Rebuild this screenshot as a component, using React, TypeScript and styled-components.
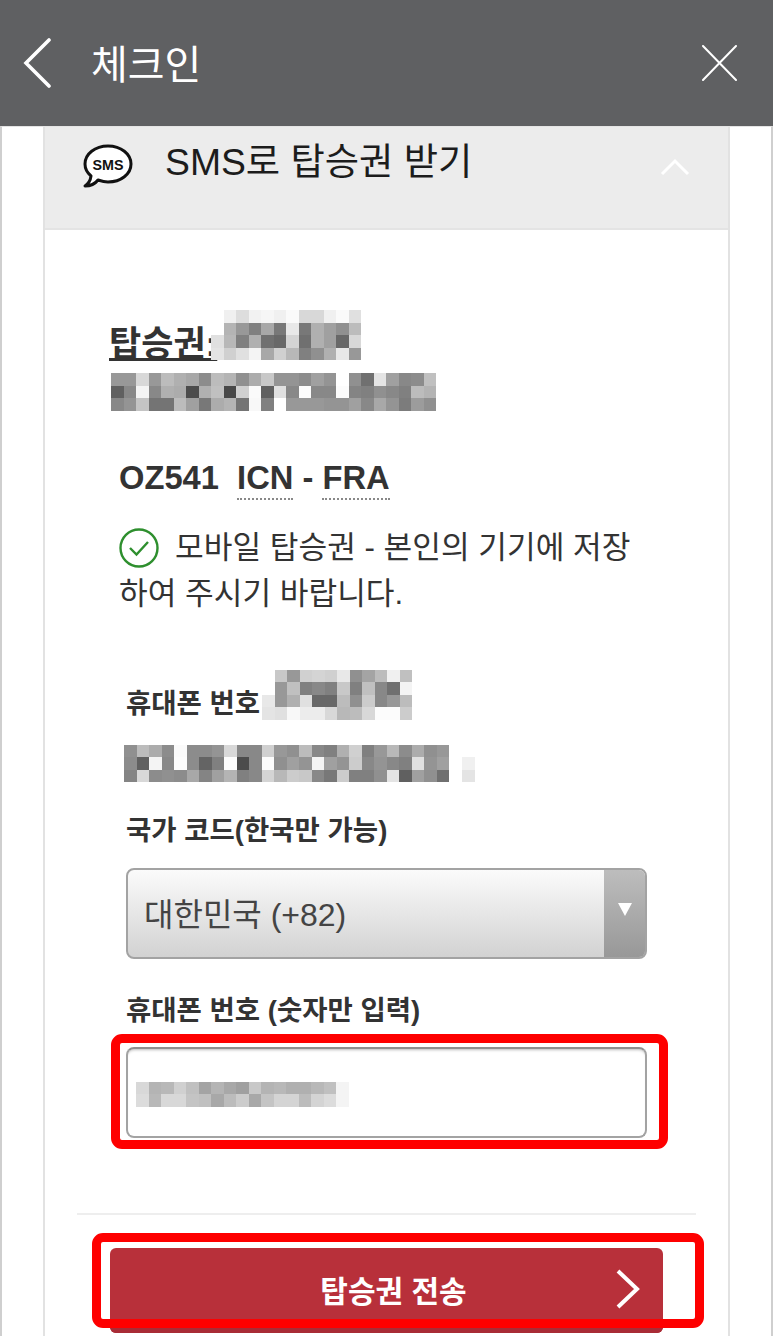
import styled, { createGlobalStyle } from "styled-components";

const KR = `"Liberation Sans", "Noto Sans CJK KR", sans-serif`;

const GlobalStyle = createGlobalStyle`
  html, body {
    margin: 0;
    padding: 0;
    background: #fff;
    font-family: ${KR};
  }
`;

const Screen = styled.div`
  width: 773px;
  height: 1336px;
  overflow: hidden;
  display: flex;
  flex-direction: column;
`;

const TopBar = styled.header`
  flex: none;
  height: 126px;
  background: #5f6062;
  display: flex;
  align-items: center;
  padding: 0 36px 0 23px;
  box-sizing: border-box;
  color: #fff;
`;

const TopTitle = styled.h1`
  flex: 1;
  margin: 4px 0 0 40px;
  font-size: 40px;
  font-weight: 400;
  line-height: 1;
`;

const Page = styled.main`
  flex: 1;
  border-left: 2px solid #cfcfcf;
  border-right: 2px solid #cfcfcf;
  padding: 0 41px;
  border-top: 1px solid #e4e4e4;
`;

const Panel = styled.section`
  border-left: 2px solid #e2e2e2;
  border-right: 2px solid #e2e2e2;
  height: 100%;
`;

const PanelHead = styled.div`
  height: 103px;
  background: #ececec;
  border-bottom: 2px solid #e4e4e4;
  display: flex;
  align-items: flex-start;
  padding: 9px 38px 0 37px;
  box-sizing: border-box;
`;

const PanelTitle = styled.h2`
  flex: 1;
  margin: 2px 0 0 31px;
  font-size: 37.3px;
  font-weight: 400;
  line-height: 48px;
  color: #1c1c1c;
`;

const PanelBody = styled.div`
  padding: 80px 32px 0;
`;

const TicketRow = styled.div`
  display: flex;
  align-items: flex-end;
  margin-left: 34px;
`;

const TicketLabel = styled.span`
  font-size: 35px;
  font-weight: 700;
  line-height: 44px;
  color: #333;
  text-decoration: underline;
  text-underline-offset: 2px;
  white-space: nowrap;
  width: 100px;
  margin: 0 0 -6px -2px;
  padding-right: 2px;
`;

const Tile = styled.div<{ $cols: number; $cell: number }>`
  display: grid;
  grid-template-columns: repeat(${(p) => p.$cols}, ${(p) => p.$cell}px);
  grid-auto-rows: ${(p) => p.$cell}px;
  flex: none;
  filter: blur(0.4px);
`;

const TicketMosaicBelow = styled.div`
  margin: 13px 0 0 34px;
`;

const Flight = styled.div`
  margin: 43px 0 0 42px;
  font-size: 32.7px;
  font-weight: 700;
  line-height: 48px;
  color: #333;
`;

const Airport = styled.abbr`
  text-decoration: none;
  border-bottom: 2px dotted #888;
  padding-bottom: 2px;
`;

const Notice = styled.p`
  margin: 23px 0 0 42px;
  width: 525px;
  font-size: 31.2px;
  line-height: 46px;
  color: #333;
`;

const CheckIcon = styled.svg`
  width: 40px;
  height: 40px;
  vertical-align: -10px;
  margin-right: 16px;
`;

const Form = styled.div`
  padding: 0 49px;
  margin-top: 53px;
`;

const PhoneRow = styled.div`
  display: flex;
  align-items: flex-end;
`;

const FieldLabel = styled.label`
  display: block;
  font-size: 27.5px;
  font-weight: 700;
  line-height: 40px;
  color: #333;
  white-space: nowrap;
`;

const PhoneLabel = styled(FieldLabel)`
  width: 136px;
  margin-bottom: -4px;
`;

const PhoneMosaic = styled.div`
  display: flex;
  align-items: flex-end;
  margin-top: 25px;
  margin-left: -2px;
  gap: 13px;
`;

const CodeLabel = styled(FieldLabel)`
  margin-top: 29px;
`;

const SelectBox = styled.div`
  margin-top: 17px;
  height: 91px;
  box-sizing: border-box;
  border: 2px solid #a3a3a3;
  border-radius: 8px;
  background: linear-gradient(#fbfbfb, #d2d2d2);
  display: flex;
  align-items: center;
  overflow: hidden;
  font-size: 32px;
  color: #444;
`;

const SelectValue = styled.span`
  flex: 1;
  padding: 0 0 3px 16px;
`;

const SelectArrow = styled.span`
  width: 41px;
  align-self: stretch;
  background: linear-gradient(#bdbdbd, #989898);
  display: flex;
  align-items: flex-start;
  justify-content: center;
  padding-top: 33px;
  box-sizing: border-box;
`;

const ArrowGlyph = styled.span`
  width: 0;
  height: 0;
  border-left: 7px solid transparent;
  border-right: 7px solid transparent;
  border-top: 13px solid #fff;
`;

const InputLabel = styled(FieldLabel)`
  margin-top: 32px;
`;

const Marked = styled.div`
  position: relative;
`;

const RedMark = styled.span<{ $top: number; $right: number; $bottom: number; $left: number }>`
  position: absolute;
  top: ${(p) => p.$top}px;
  right: ${(p) => p.$right}px;
  bottom: ${(p) => p.$bottom}px;
  left: ${(p) => p.$left}px;
  border: 9px solid #fe0000;
  border-radius: 11px;
  pointer-events: none;
`;

const InputBox = styled.div`
  margin-top: 16px;
  height: 91px;
  box-sizing: border-box;
  border: 2px solid #a3a3a3;
  border-top-color: #8f8f8f;
  border-radius: 8px;
  background: #fff;
  box-shadow: inset 0 3px 3px -2px #bbb;
  display: flex;
  align-items: center;
  padding: 3px 0 0 8px;
`;

const Divider = styled.hr`
  margin: 75px 0 0;
  border: none;
  border-top: 2px solid #eeeeee;
`;

const ButtonSlot = styled.div`
  margin: 33px 65px 0 65px;
`;

const SendButton = styled.button`
  width: 100%;
  height: 85px;
  border: none;
  border-radius: 6px;
  background: #b8303a;
  box-shadow: inset 0 -6px 0 #a82c36;
  color: #fff;
  font-family: ${KR};
  font-size: 30px;
  font-weight: 700;
  display: flex;
  align-items: center;
  justify-content: center;
  position: relative;
  padding: 0 0 4px 14px;
`;

const ButtonChevron = styled.svg`
  position: absolute;
  right: 22px;
  top: 21px;
  width: 26px;
  height: 40px;
`;

const ticketA = [
  "ff f0 dd f2 f6 f0 fa d8 d8 f0 fa e0",
  "ff b4 98 80 a8 78 e8 78 b0 a0 90 bc",
  "e0 b8 80 b0 70 68 d4 70 b0 a0 68 d8",
  "e4 d0 e0 f4 a8 d0 b8 80 90 b0 e8 98",
];
const ticketB = [
  "98 98 d8 98 bc b0 a8 8c bc b4 90 ac c8 94 94 8c a0 94 ff 90 70 e4 a0 88 8c c0",
  "60 88 f4 88 b0 ac 4c b0 c0 48 d0 fa 60 e0 88 fc 88 88 fc 84 80 90 88 80 bc b4",
  "88 94 c4 74 74 bc a0 78 ac b4 74 f8 80 ff 98 98 98 94 94 a0 88 a8 94 7c 9c 90",
];
const phoneA = [
  "ff c8 98 d0 d4 d0 e8 90 a4 bc f0 c0",
  "ff 98 c0 80 88 80 c8 80 c0 88 70 f4",
  "e8 98 b0 e0 68 68 bc 90 cc 88 98 bc",
  "e4 e0 f8 ec ec d8 b8 bc d8 fc fc cc",
];
const phoneB = [
  "90 bc ac 8c fa 8c 8c 94 d8 88 88 d0 98 90 bc 88 80 b0 d0 80 98 b8 8c ac 90 98",
  "8c 60 f4 88 fc 8c 64 80 fc 4c 88 fc 90 a0 94 f4 a0 94 cc 88 94 88 80 e0 94 a0",
  "84 d8 8c 90 8c a8 84 a0 b4 80 88 d4 b8 cc c8 88 78 cc 80 80 90 e4 60 a0 90 70",
];
const phoneDot = ["ff", "f0", "e4"];
const typed = [
  "d8 b4 b8 d0 c0 a4 b4 a8 a0 c8 b4 b8 b0 b0 b8 c0 f4",
  "dc b8 d8 d8 c4 c0 a8 bc cc a8 c4 d4 d4 bc d4 dc f4",
];

// pixelated redaction blocks, one grey value per cell
function Mosaic({ rows, cell = 12.5 }: { rows: string[]; cell?: number }) {
  const grid = rows.map((r) => r.split(" "));
  return (
    <Tile $cols={grid[0].length} $cell={cell}>
      {grid.flat().map((g, i) => (
        <span key={i} style={{ background: `#${g}${g}${g}` }} />
      ))}
    </Tile>
  );
}

export default function App() {
  return (
    <Screen>
      <GlobalStyle />
      <TopBar>
        <svg width="28" height="50" viewBox="0 0 28 50" fill="none" stroke="#fff" strokeWidth="3.6" strokeLinecap="round">
          <path d="M26 2 3 25l23 23" strokeLinejoin="miter" />
        </svg>
        <TopTitle>체크인</TopTitle>
        <svg width="35" height="36" viewBox="0 0 35 36" stroke="#fff" strokeWidth="2" strokeLinecap="round">
          <path d="M1 1l33 34M34 1 1 35" />
        </svg>
      </TopBar>
      <Page>
        <Panel>
          <PanelHead>
            <svg width="52" height="44" viewBox="0 0 52 44" style={{ marginTop: 8, flex: "none" }}>
              <path
                d="M26 2C13 2 3 10 3 20c0 5 2.500 9 6 12-.5 4-3 8-6 10 5 0 10-2 13-6 3 1 6 2 10 2 13 0 23-8 23-18S39 2 26 2Z"
                fill="#fff"
                stroke="#111"
                strokeWidth="3"
                strokeLinejoin="round"
              />
              <text
                x="26"
                y="26"
                textAnchor="middle"
                fontFamily="Liberation Sans, sans-serif"
                fontSize="15"
                fontWeight="700"
                textLength="31"
                lengthAdjust="spacingAndGlyphs"
                fill="#111"
              >
                SMS
              </text>
            </svg>
            <PanelTitle>SMS로 탑승권 받기</PanelTitle>
            <svg width="30" height="18" viewBox="0 0 30 18" fill="none" stroke="#fff" strokeWidth="3" style={{ marginTop: 22 }}>
              <path d="M2 16 15 3l13 13" />
            </svg>
          </PanelHead>
          <PanelBody>
            <TicketRow>
              <TicketLabel>탑승권:</TicketLabel>
              <Mosaic rows={ticketA} />
            </TicketRow>
            <TicketMosaicBelow>
              <Mosaic rows={ticketB} />
            </TicketMosaicBelow>
            <Flight>
              OZ541&nbsp; <Airport>ICN</Airport> - <Airport>FRA</Airport>
            </Flight>
            <Notice>
              <CheckIcon viewBox="0 0 40 40" fill="none">
                <circle cx="20" cy="20" r="18.500" stroke="#2e8f2e" strokeWidth="2.400" />
                <path d="M11 20l6.500 6.500L29 14" stroke="#2e8f2e" strokeWidth="2.400" />
              </CheckIcon>
              모바일 탑승권 - 본인의 기기에 저장하여 주시기 바랍니다.
            </Notice>
            <Form>
              <PhoneRow>
                <PhoneLabel>휴대폰 번호:</PhoneLabel>
                <Mosaic rows={phoneA} />
              </PhoneRow>
              <PhoneMosaic>
                <Mosaic rows={phoneB} />
                <Mosaic rows={phoneDot} />
              </PhoneMosaic>
              <CodeLabel>국가 코드(한국만 가능)</CodeLabel>
              <SelectBox>
                <SelectValue>대한민국 (+82)</SelectValue>
                <SelectArrow>
                  <ArrowGlyph />
                </SelectArrow>
              </SelectBox>
              <InputLabel>휴대폰 번호 (숫자만 입력)</InputLabel>
              <Marked>
                <InputBox>
                  <Mosaic rows={typed} />
                </InputBox>
                <RedMark $top={-13} $right={-21} $bottom={-11} $left={-15} />
              </Marked>
            </Form>
            <Divider />
          </PanelBody>
          <ButtonSlot>
            <Marked>
              <SendButton type="button">
                탑승권 전송
                <ButtonChevron viewBox="0 0 26 40" fill="none" stroke="#fff" strokeWidth="4">
                  <path d="M3 2l19 18L3 38" />
                </ButtonChevron>
              </SendButton>
              <RedMark $top={-15} $right={-41} $bottom={5} $left={-18} />
            </Marked>
          </ButtonSlot>
        </Panel>
      </Page>
    </Screen>
  );
}
